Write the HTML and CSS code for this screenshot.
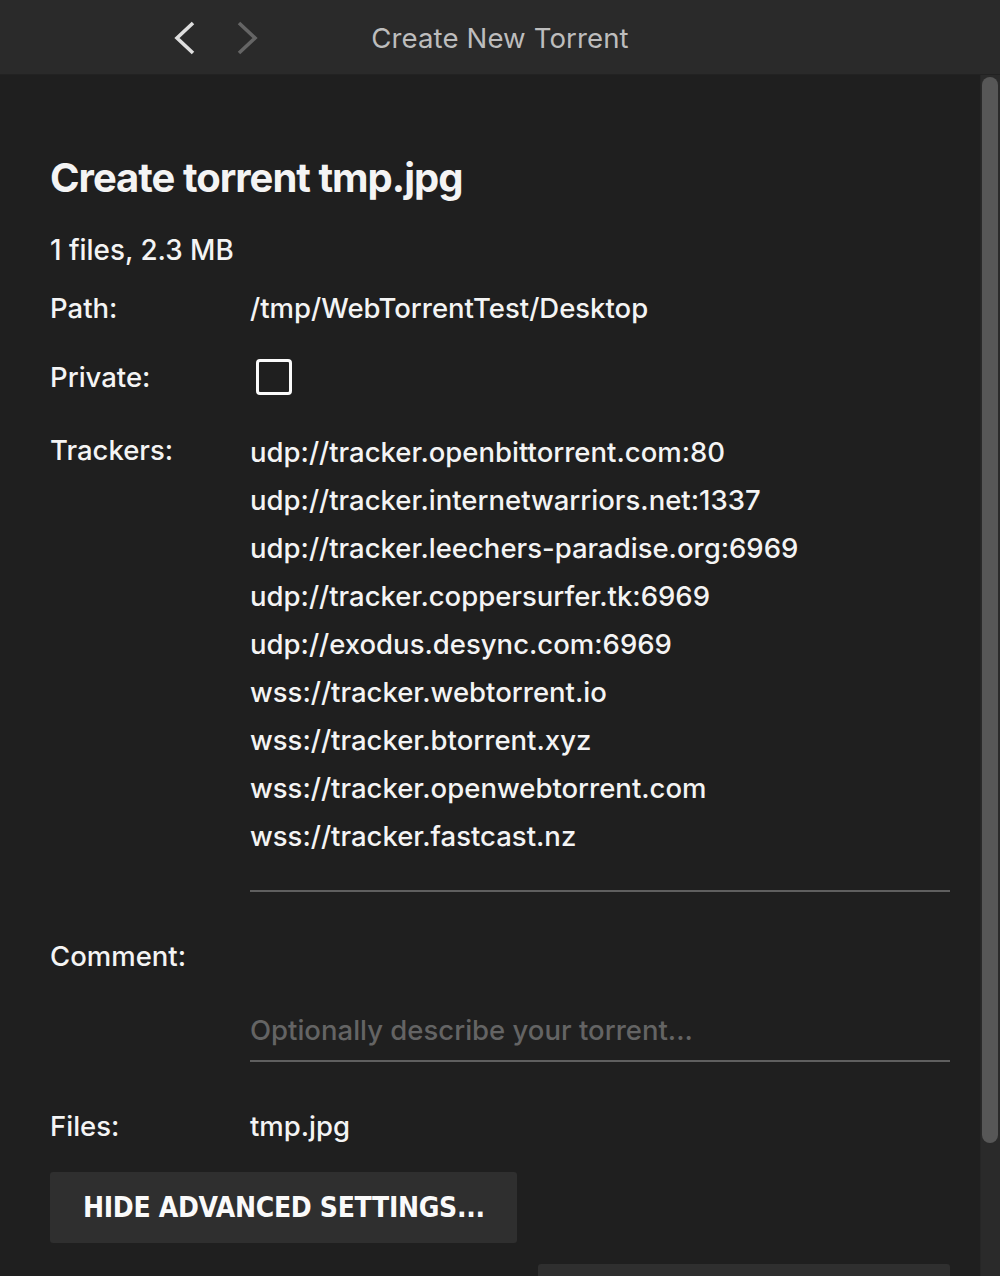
FILE: index.html
```html
<!DOCTYPE html>
<html>
<head>
<meta charset="utf-8">
<link rel="stylesheet" href="styles.css">
</head>
<body>
<header class="titlebar">
  <div class="nav">
    <svg class="chev" width="24" height="34" viewBox="0 0 24 34"><polyline points="20,2 4,17 20,32" fill="none" stroke="#dedede" stroke-width="3.6"/></svg>
    <svg class="chev" width="24" height="34" viewBox="0 0 24 34"><polyline points="4,2 20,17 4,32" fill="none" stroke="#656565" stroke-width="3.6"/></svg>
  </div>
  <div class="title">Create New Torrent</div>
</header>
<div class="main">
  <div class="content">
    <h1 class="heading">Create torrent tmp.jpg</h1>
    <div class="summary">1 files, 2.3 MB</div>
    <div class="row row-path">
      <div class="label">Path:</div>
      <div class="value">/tmp/WebTorrentTest/Desktop</div>
    </div>
    <div class="row row-private">
      <div class="label">Private:</div>
      <div class="value"><span class="checkbox"></span></div>
    </div>
    <div class="row row-trackers">
      <div class="label">Trackers:</div>
      <div class="value field trackers">
        <div>udp://tracker.openbittorrent.com:80</div>
        <div>udp://tracker.internetwarriors.net:1337</div>
        <div>udp://tracker.leechers-paradise.org:6969</div>
        <div>udp://tracker.coppersurfer.tk:6969</div>
        <div>udp://exodus.desync.com:6969</div>
        <div>wss://tracker.webtorrent.io</div>
        <div>wss://tracker.btorrent.xyz</div>
        <div>wss://tracker.openwebtorrent.com</div>
        <div>wss://tracker.fastcast.nz</div>
      </div>
    </div>
    <div class="row row-comment">
      <div class="label">Comment:</div>
      <div class="value field comment"><span class="placeholder">Optionally describe your torrent...</span></div>
    </div>
    <div class="row row-files">
      <div class="label">Files:</div>
      <div class="value">tmp.jpg</div>
    </div>
    <div class="buttons">
      <button class="btn">HIDE ADVANCED SETTINGS...</button>
    </div>
    <div class="buttons right">
      <button class="btn btn-wide"></button>
    </div>
  </div>
  <div class="scrollbar"><div class="thumb"></div></div>
</div>
</body>
</html>
```
FILE: styles.css
```css
* { box-sizing: border-box; }
html, body { margin: 0; padding: 0; }
body {
  width: 1000px;
  height: 1276px;
  overflow: hidden;
  background: #1f1f1f;
  color: #f4f4f4;
  font-family: Inter, "Noto Sans", sans-serif;
}
.titlebar {
  height: 75px;
  background: #2a2a2a;
  border-bottom: 1px solid #222;
  display: flex;
  align-items: center;
  position: relative;
}
.nav {
  display: flex;
  gap: 38px;
  padding-left: 173px;
  padding-top: 2px;
}
.chev { display: block; }
.title {
  position: absolute;
  left: 0;
  right: 0;
  top: 0;
  height: 74px;
  line-height: 76px;
  text-align: center;
  font-size: 27.6px;
  color: #bdbdbd;
  letter-spacing: 0.1px;
  pointer-events: none;
}
.main {
  display: flex;
  height: 1201px;
}
.content {
  flex: 1;
  padding: 79px 30px 0 50px;
}
.scrollbar {
  width: 20px;
  background: #2a2a2a;
  border-left: 1px solid #262626;
  padding: 2px 2px 0 1px;
}
.thumb {
  height: 1066px;
  background: #575757;
  border-radius: 8px;
}
.heading {
  margin: 0;
  font-size: 40px;
  line-height: 48px;
  font-weight: 700;
  letter-spacing: -1px;
  color: #f4f4f4;
}
.summary {
  margin-top: 24px;
  font-size: 27.8px;
  line-height: 48px;
  font-weight: 500;
}
.row {
  display: grid;
  grid-template-columns: 200px 1fr;
  font-size: 27.5px;
  line-height: 48px;
  font-weight: 500;
}
.row-path { margin-top: 10px; }
.row-private { margin-top: 21px; }
.row-private .value { display: flex; align-items: center; }
.checkbox {
  display: block;
  width: 36px;
  height: 36px;
  margin-left: 6px;
  border: 3.5px solid #fafafa;
  border-radius: 4px;
}
.row-trackers { margin-top: 27px; }
.row-trackers .label { margin-top: -2px; }
.field {
  border-bottom: 2px solid #5f5f5f;
}
.trackers { padding-bottom: 30px; }
.row-comment { margin-top: 40px; }
.comment {
  padding-top: 74px;
  padding-bottom: 6px;
}
.placeholder { color: #646464; }
.row-files { margin-top: 40px; }
.buttons {
  display: flex;
  margin-top: 22px;
}
.buttons.right {
  justify-content: flex-end;
  margin-top: 21px;
}
.btn {
  height: 71px;
  width: 467px;
  padding: 0 0 0 33px;
  text-align: left;
  background: #2f2f2f;
  color: #fafafa;
  border: none;
  border-radius: 3px;
  font-family: "DejaVu Sans Condensed", "DejaVu Sans", sans-serif;
  font-weight: 700;
  font-size: 28px;
  letter-spacing: -0.32px;
}
.btn-wide { width: 412px; }
```
